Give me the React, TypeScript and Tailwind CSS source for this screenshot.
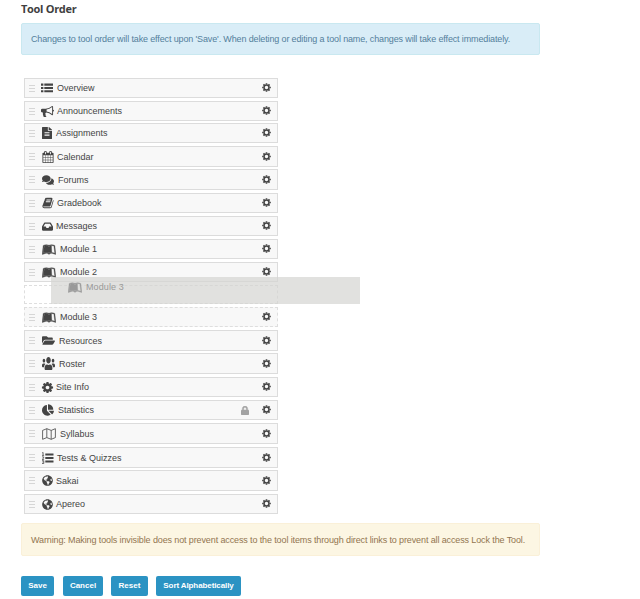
import type { ReactNode } from "react";
import {
  FaFileAlt, FaComments, FaInbox, FaLeanpub, FaFolderOpen, FaUsers,
  FaChartPie, FaGlobeAmericas, FaLock,
} from "react-icons/fa";

const COG = "M1152 896q0-106-75-181t-181-75-181 75-75 181 75 181 181 75 181-75 75-181zm512-109v222q0 12-8 23t-20 13l-185 28q-19 54-39 91 35 50 107 138 10 12 10 25t-9 23q-27 37-99 108t-94 71q-12 0-26-9l-138-108q-44 23-91 38-16 136-29 186-7 28-36 28h-222q-14 0-24.5-8.5t-11.5-21.5l-28-184q-49-16-90-37l-141 107q-10 9-25 9-14 0-25-11-126-114-165-168-7-10-7-23 0-12 8-23 15-21 51-66.5t54-70.5q-27-50-41-99l-183-27q-13-2-21-12.5t-8-23.5v-222q0-12 8-23t19-13l186-28q14-46 39-92-40-57-107-138-10-12-10-24 0-10 9-23 26-36 98.5-107.5t94.5-71.5q13 0 26 10l138 107q44-23 91-38 16-136 29-186 7-28 36-28h222q14 0 24.5 8.5t11.5 21.5l28 184q49 16 90 37l142-107q9-9 24-9 13 0 25 10 129 119 165 170 7 8 7 22 0 12-8 23-15 21-51 66.5t-54 70.5q26 50 41 98l183 28q13 2 21 12.5t8 23.5z";
const HORN = "M1664 640q53 0 90.5 37.5t37.5 90.5-37.5 90.5-90.5 37.5v384q0 52-38 90t-90 38q-417-347-812-380-58 19-91 66t-31 100.5 40 92.5q-20 33-23 65.5t6 58 33.5 55 48 50 61.5 50.5q-29 58-111.5 83t-168.5 11.5-132-55.5q-7-23-29.5-87.5t-32-94.5-23-89-15-101 3.5-98.5 22-110.5h-122q-66 0-113-47t-47-113v-192q0-66 47-113t113-47h480q435 0 896-384 52 0 90 38t38 90v384zm-128 604v-954q-394 302-768 343v270q377 42 768 341z";
const CALENDAR = "M192 1664h288v-288h-288v288zm352 0h320v-288h-320v288zm-352-352h288v-320h-288v320zm352 0h320v-320h-320v320zm-352-384h288v-288h-288v288zm736 736h320v-288h-320v288zm-384-736h320v-288h-320v288zm768 736h288v-288h-288v288zm-384-352h320v-320h-320v320zm-352-864v-288q0-13-9.5-22.5t-22.5-9.5h-64q-13 0-22.5 9.5t-9.5 22.5v288q0 13 9.5 22.5t22.5 9.5h64q13 0 22.5-9.5t9.5-22.5zm736 864h288v-320h-288v320zm-384-384h320v-288h-320v288zm384 0h288v-288h-288v288zm32-480v-288q0-13-9.5-22.5t-22.5-9.5h-64q-13 0-22.5 9.5t-9.5 22.5v288q0 13 9.5 22.5t22.5 9.5h64q13 0 22.5-9.5t9.5-22.5zm384-64v1280q0 52-38 90t-90 38h-1408q-52 0-90-38t-38-90v-1280q0-52 38-90t90-38h128v-96q0-66 47-113t113-47h64q66 0 113 47t47 113v96h384v-96q0-66 47-113t113-47h64q66 0 113 47t47 113v96h128q52 0 90 38t38 90z";
const BOOK = "M1703 478q40 57 18 129l-275 906q-19 64-76.5 107.5t-122.5 43.5h-923q-77 0-148.5-53.5t-99.5-131.5q-24-67-2-127 0-4 3-27t4-37q1-8-3-21.5t-3-19.5q2-11 8-21t16.5-23.5 16.5-23.5q23-38 45-91.5t30-91.5q3-10 .5-30t-.5-28q3-11 17-28t17-23q21-36 42-92t25-90q1-9-2.5-32t.5-28q4-13 22-30.5t22-22.5q19-26 42.5-84.5t27.5-96.5q1-8-3-25.5t-2-26.5q2-8 9-18t18-23 17-21q8-12 16.5-30.5t15-35 16-36 19.5-32 26.5-23.5 36-11.5 47.5 5.5l-1 3q38-9 51-9h761q74 0 114 56t18 130l-274 906q-36 119-71.5 153.5t-128.5 34.5h-869q-27 0-38 15-11 16-1 43 24 70 144 70h923q29 0 56-15.5t35-41.5l300-987q7-22 5-57 38 15 59 43zm-1064 2q-4 13 2 22.5t20 9.5h608q13 0 25.5-9.5t16.5-22.5l21-64q4-13-2-22.5t-20-9.5h-608q-13 0-25.5 9.5t-16.5 22.5zm-83 256q-4 13 2 22.5t20 9.5h608q13 0 25.5-9.5t16.5-22.5l21-64q4-13-2-22.5t-20-9.5h-608q-13 0-25.5 9.5t-16.5 22.5z";

function Glyph({ d, className }: { d: string; className: string }) {
  return (
    <svg viewBox="0 0 1792 1792" className={className} fill="currentColor">
      <path d={d} />
    </svg>
  );
}

function MapIcon() {
  return (
    <svg viewBox="0 0 14 12" className="h-3 w-3.5" fill="none" stroke="currentColor" strokeWidth="0.8" strokeLinejoin="round">
      <path d="M.6 2.4 4.8.7l4.4 1.7L13.4.7v8.9l-4.2 1.7-4.4-1.7L.6 11.3zM4.8.7v8.9M9.2 2.4v8.9" />
    </svg>
  );
}

function ListIcon() {
  return (
    <svg viewBox="0 0 12 10" className="-ml-px h-[10px] w-[12px]" fill="currentColor">
      <path d="M0 .6h2.4v2.1H0zM3.3.6H12v2.1H3.3zM0 3.9h2.4V6H0zM3.3 3.9H12V6H3.3zM0 7.2h2.4v2.1H0zM3.3 7.2H12v2.1H3.3z" />
    </svg>
  );
}

function NumberedListIcon() {
  return (
    <svg viewBox="0 0 12 12" className="-ml-px h-[12px] w-[13px]" fill="currentColor">
      <path d="M3.8 1.5H12v1.9H3.8zM3.8 5H12v1.9H3.8zM3.8 8.5H12v1.9H3.8z" />
      <path d="M.6 1 1.6.4v3M.5 3.4h2.1M.5 4.9h1.7v1.2L.6 7.4h2M.5 8.7h1.8v2.8H.5M.9 10h1.3" fill="none" stroke="currentColor" strokeWidth=".75" />
    </svg>
  );
}

function GearIcon() {
  return (
    <svg viewBox="0 0 10 10" className="mr-[6px] mb-px size-[9px] shrink-0" fill="none" stroke="currentColor">
      <circle cx="5" cy="5" r="2.75" strokeWidth="1.7" />
      <path
        d="M5 .2v1.5M5 8.3v1.5M.2 5h1.5M8.3 5h1.5M1.6 1.6l1.1 1.1M7.3 7.3l1.1 1.1M1.6 8.4l1.1-1.1M7.3 2.7l1.1-1.1"
        strokeWidth="1.8"
      />
    </svg>
  );
}

function Grip() {
  return (
    <span className="flex w-[6px] shrink-0 flex-col gap-[2px]">
      <span className="h-px bg-[#d6d6d6]" />
      <span className="h-px bg-[#d6d6d6]" />
      <span className="h-px bg-[#d6d6d6]" />
    </span>
  );
}

const leanpub = <FaLeanpub className="h-[13px] w-[14px]" stroke="currentColor" strokeWidth="14" preserveAspectRatio="none" />;
const globe = <FaGlobeAmericas className="size-[11px]" />;

type Tool = { name: string; icon: ReactNode; slot: string; box: string; dashed?: boolean; locked?: boolean };

const before: Tool[] = [
  { name: "Overview", icon: <ListIcon />, slot: "w-[15px]", box: "h-5" },
  { name: "Announcements", icon: <Glyph d={HORN} className="-ml-px size-[13px]" />, slot: "w-[15px]", box: "mt-[3px] h-5" },
  { name: "Assignments", icon: <FaFileAlt className="h-[12px] w-[10px]" preserveAspectRatio="none" />, slot: "w-[14px]", box: "mt-[2px] h-5" },
  { name: "Calendar", icon: <Glyph d={CALENDAR} className="size-[12px]" />, slot: "w-[15px]", box: "mt-[3px] h-[21px]" },
  { name: "Forums", icon: <FaComments className="size-[12px]" />, slot: "w-[16px]", box: "mt-[2px] h-[21px]" },
  { name: "Gradebook", icon: <Glyph d={BOOK} className="size-[12px]" />, slot: "w-[15px]", box: "mt-[3px] h-5" },
  { name: "Messages", icon: <FaInbox className="h-[11px] w-[11px]" preserveAspectRatio="none" />, slot: "w-[14px]", box: "mt-[3px] h-5" },
  { name: "Module 1", icon: leanpub, slot: "w-[18px]", box: "mt-[3px] h-5" },
  { name: "Module 2", icon: leanpub, slot: "w-[18px]", box: "mt-[3px] h-5" },
];

const after: Tool[] = [
  { name: "Module 3", icon: leanpub, slot: "w-[18px]", box: "mt-[3px] h-5", dashed: true },
  { name: "Resources", icon: <FaFolderOpen className="size-[13px]" />, slot: "w-[17px]", box: "mt-[3px] h-[21px]" },
  { name: "Roster", icon: <FaUsers className="h-[15px] w-[13px]" preserveAspectRatio="none" />, slot: "w-[17px]", box: "mt-[2px] h-[21px]" },
  { name: "Site Info", icon: <Glyph d={COG} className="-ml-px size-[13px]" />, slot: "w-[14px]", box: "mt-[3px] h-5" },
  { name: "Statistics", icon: <FaChartPie className="size-[12px]" />, slot: "w-[16px]", box: "mt-[3px] h-5", locked: true },
  { name: "Syllabus", icon: <MapIcon />, slot: "w-[18px]", box: "mt-[3px] h-[21px]" },
  { name: "Tests & Quizzes", icon: <NumberedListIcon />, slot: "w-[15px]", box: "mt-[3px] h-[21px]" },
  { name: "Sakai", icon: globe, slot: "w-[14px]", box: "mt-[2px] h-[21px]" },
  { name: "Apereo", icon: globe, slot: "w-[14px]", box: "mt-[3px] h-5" },
];

function Row({ tool }: { tool: Tool }) {
  return (
    <li className={`${tool.box} flex shrink-0 items-center border bg-[#f8f8f8] pl-[4px] ${tool.dashed ? "border-dashed border-[#dedede]" : "border-[#dcdcdc]"}`}>
      <Grip />
      <span className={`${tool.slot} ml-[7px] flex shrink-0 items-center`}>{tool.icon}</span>
      <span className="grow pt-px leading-[13px] whitespace-nowrap">{tool.name}</span>
      {tool.locked && <FaLock className="mr-[13px] h-[9px] w-[8px] text-[#a3a3a3]" stroke="currentColor" strokeWidth="20" preserveAspectRatio="none" />}
      <GearIcon />
    </li>
  );
}

export default function App() {
  return (
    <main className="flex h-[599px] w-[640px] flex-col overflow-hidden bg-white pl-[21px] font-['Liberation_Sans',Arial,sans-serif] text-[9px] text-[#444]">
      <h1 className="mt-px h-[22px] font-['Open_Sans',sans-serif] text-[11px] leading-[15px] font-bold tracking-[-0.3px] text-[#404040]">Tool Order</h1>
      <p className="flex h-8 w-[519px] shrink-0 items-center rounded-[2px] border border-[#c9e8f0] bg-[#d9edf7] pt-[2px] pl-[9px] tracking-[-0.135px] whitespace-nowrap text-[#54809c]">
        Changes to tool order will take effect upon 'Save'. When deleting or editing a tool name, changes will take effect immediately.
      </p>
      <ul className="relative mt-[23px] ml-[3px] flex w-[254px] flex-col">
        {before.map((t) => <Row key={t.name} tool={t} />)}
        <li className="mt-[3px] h-[19px] shrink-0 border border-dashed border-[#dedede]" />
        {after.map((t) => <Row key={t.name} tool={t} />)}
        <li className="absolute top-[199px] left-[27px] flex h-[27px] w-[309px] items-start bg-[#d4d4d2]/70 pt-[4px] pl-[17px] text-[#999]">
          <span className="flex w-[18px]"><FaLeanpub className="h-[13px] w-[14px]" stroke="currentColor" strokeWidth="14" preserveAspectRatio="none" /></span>
          <span className="pt-px leading-[11px] tracking-[0.1px]">Module 3</span>
        </li>
      </ul>
      <p className="mt-[9px] flex h-[33px] w-[519px] shrink-0 items-center rounded-[2px] border border-[#faf0d8] bg-[#fcf6e3] pt-[2px] pl-[9px] tracking-[-0.12px] whitespace-nowrap text-[#927550]">
        Warning: Making tools invisible does not prevent access to the tool items through direct links to prevent all access Lock the Tool.
      </p>
      <div className="mt-5 flex h-5 shrink-0 text-[8px] font-bold text-white">
        <button className="w-[33px] rounded-[2px] bg-[#2b93c3]">Save</button>
        <button className="ml-[9px] w-10 rounded-[2px] bg-[#2b93c3]">Cancel</button>
        <button className="ml-2 w-[37px] rounded-[2px] bg-[#2b93c3]">Reset</button>
        <button className="ml-2 w-[85px] rounded-[2px] bg-[#2b93c3] tracking-[-0.1px]">Sort Alphabetically</button>
      </div>
    </main>
  );
}
